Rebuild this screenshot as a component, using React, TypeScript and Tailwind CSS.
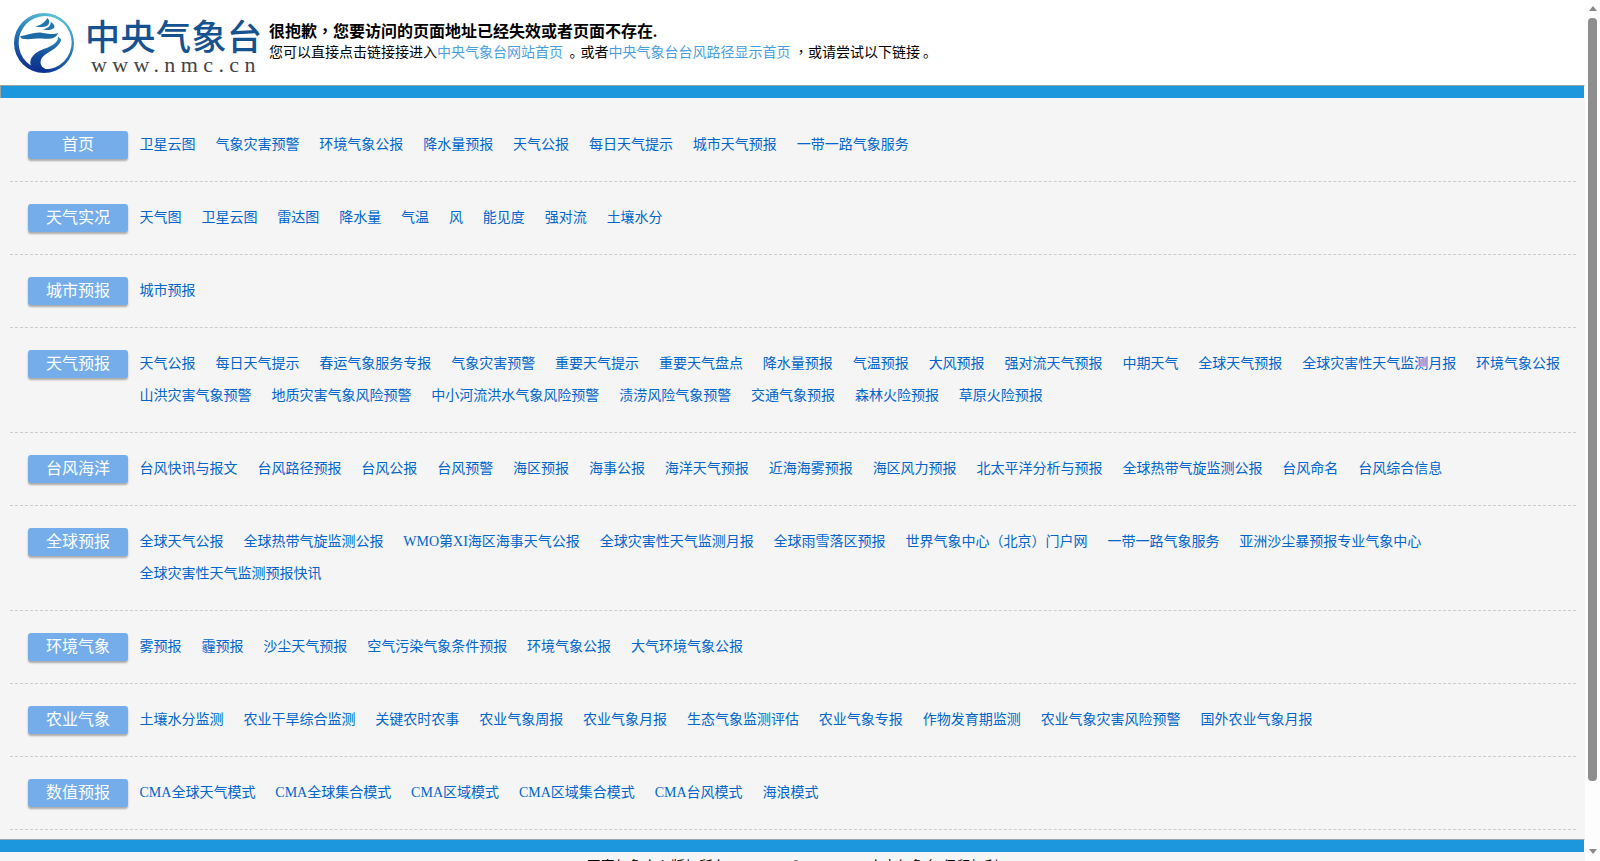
const sections: { title: string; links: string[] }[] = [
  { title: "首页", links: ["卫星云图", "气象灾害预警", "环境气象公报", "降水量预报", "天气公报", "每日天气提示", "城市天气预报", "一带一路气象服务"] },
  { title: "天气实况", links: ["天气图", "卫星云图", "雷达图", "降水量", "气温", "风", "能见度", "强对流", "土壤水分"] },
  { title: "城市预报", links: ["城市预报"] },
  {
    title: "天气预报",
    links: ["天气公报", "每日天气提示", "春运气象服务专报", "气象灾害预警", "重要天气提示", "重要天气盘点", "降水量预报", "气温预报", "大风预报", "强对流天气预报", "中期天气", "全球天气预报", "全球灾害性天气监测月报", "环境气象公报", "山洪灾害气象预警", "地质灾害气象风险预警", "中小河流洪水气象风险预警", "渍涝风险气象预警", "交通气象预报", "森林火险预报", "草原火险预报"],
  },
  { title: "台风海洋", links: ["台风快讯与报文", "台风路径预报", "台风公报", "台风预警", "海区预报", "海事公报", "海洋天气预报", "近海海雾预报", "海区风力预报", "北太平洋分析与预报", "全球热带气旋监测公报", "台风命名", "台风综合信息"] },
  { title: "全球预报", links: ["全球天气公报", "全球热带气旋监测公报", "WMO第XI海区海事天气公报", "全球灾害性天气监测月报", "全球雨雪落区预报", "世界气象中心（北京）门户网", "一带一路气象服务", "亚洲沙尘暴预报专业气象中心", "全球灾害性天气监测预报快讯"] },
  { title: "环境气象", links: ["雾预报", "霾预报", "沙尘天气预报", "空气污染气象条件预报", "环境气象公报", "大气环境气象公报"] },
  { title: "农业气象", links: ["土壤水分监测", "农业干旱综合监测", "关键农时农事", "农业气象周报", "农业气象月报", "生态气象监测评估", "农业气象专报", "作物发育期监测", "农业气象灾害风险预警", "国外农业气象月报"] },
  { title: "数值预报", links: ["CMA全球天气模式", "CMA全球集合模式", "CMA区域模式", "CMA区域集合模式", "CMA台风模式", "海浪模式"] },
];

function Logo() {
  return (
    <svg width="62" height="62" viewBox="12 12 186 186" className="shrink-0">
      <defs>
        <linearGradient id="ring" x1="0.75" y1="0" x2="0.35" y2="1">
          <stop offset="0" stopColor="#63c8dc" />
          <stop offset="0.45" stopColor="#2a7fb8" />
          <stop offset="1" stopColor="#0d2f8f" />
        </linearGradient>
        <linearGradient id="body" x1="0.5" y1="0" x2="0.5" y2="1">
          <stop offset="0" stopColor="#2f8cc4" />
          <stop offset="0.55" stopColor="#124a9a" />
          <stop offset="1" stopColor="#0b2c90" />
        </linearGradient>
      </defs>
      <path
        fillRule="evenodd"
        fill="url(#ring)"
        d="M108 15a90 90 0 1 0 0 180a90 90 0 1 0 0-180zM110 24a80 80 0 0 1 2 160a78 78 0 0 1-80-78a80 80 0 0 1 78-82z"
      />
      <path d="M118 30C112 42 98 52 82 56C96 58 108 58 116 54C126 48 126 38 118 30Z" fill="#1f75ad" />
      <path d="M128 42C130 52 120 62 104 64C116 68 132 66 138 60C142 54 136 46 128 42Z" fill="#1f75ad" />
      <path d="M36 85C58 82 78 72 100 74C118 76 136 82 150 74C146 90 128 94 108 92C86 90 62 96 42 92Z" fill="#1c6aa8" />
      <path d="M150 86C152 106 122 118 102 125C82 132 62 150 68 170C72 185 100 195 130 188C105 185 92 170 100 152C108 135 150 125 160 96C158 92 154 88 150 86Z" fill="url(#body)" />
    </svg>
  );
}

export default function App() {
  return (
    <div className="flex h-screen overflow-hidden bg-white font-['Liberation_Serif','Noto_Sans_CJK_SC',serif]">
      <main className="w-[1585px] shrink-0">
        <header className="flex h-[85px] items-start bg-white pl-3">
          <div className="flex w-[257px] shrink-0 items-start pt-[12px]">
            <Logo />
            <div className="ml-[11px] mt-[5px]">
              <div className="text-[35px] leading-[36px] font-medium tracking-[0.5px] whitespace-nowrap text-[#15528f] font-['Noto_Sans_CJK_SC',serif]">中央气象台</div>
              <div className="ml-[6px] mt-[2px] text-[22px] leading-[20px] tracking-[5.4px] whitespace-nowrap text-[#444]">www.nmc.cn</div>
            </div>
          </div>
          <div className="pt-[21px] text-black whitespace-nowrap">
            <p className="text-[16px] leading-[21px] font-bold">
              很抱歉<span className="leading-[0] font-['Noto_Sans_CJK_TC',serif]">，</span>您要访问的页面地址已经失效或者页面不存在.
            </p>
            <p className="text-[14px] leading-[21px]">
              您可以直接点击链接接进入<a className="text-[#4a9fdf]">中央气象台网站首页</a> <span className="ml-[3px] mr-[-3px]">。</span>或者<a className="text-[#4a9fdf]">中央气象台台风路径显示首页</a> <span className="leading-[0] font-['Noto_Sans_CJK_TC',serif]">，</span>或请尝试以下链接<span className="ml-[3px] mr-[-3px]">。</span>
            </p>
          </div>
        </header>
        <div className="h-[13px] w-[1585px] border-t border-l border-r border-t-[#9aa4ab] border-l-[#9aa4ab] border-r-white bg-[#1c96dd]" />
        <div className="bg-[#f5f5f5] pt-[11px] pb-[9px]">
          {sections.map((s) => (
            <section key={s.title} className="mx-[10px] flex w-[1566px] border-b border-dashed border-[#ccc] py-[20px]">
              <div className="mt-[2px] ml-[18px] flex h-[28px] w-[100px] shrink-0 items-center justify-center rounded-[3px] bg-[#74ade9] text-[16px] text-white shadow-[0_2px_2px_rgba(0,0,0,0.3)]">
                {s.title}
              </div>
              <div className="ml-[11.5px] flex flex-1 flex-wrap gap-x-[19.9px]">
                {s.links.map((l) => (
                  <a key={l} className="text-[14px] leading-[32px] whitespace-nowrap text-[#0066cc]">
                    {l}
                  </a>
                ))}
              </div>
            </section>
          ))}
        </div>
        <div className="h-[13px] w-[1585px] border-t border-r border-t-[#9aa4ab] border-r-white bg-[#1c96dd]" />
        <div className="bg-[#f5f5f5] pt-[4px] text-center text-[14px] leading-[21px] text-black">
          国家气象中心版权所有 Copyright © 2010-2025 中央气象台 保留权利
        </div>
      </main>
      <aside className="flex w-[15px] shrink-0 flex-col items-center bg-[#fdfdfd]">
        <div className="mt-[6px] h-0 w-0 border-x-[4.5px] border-b-[5px] border-x-transparent border-b-[#888]" />
        <div className="mt-[7px] h-[763px] w-[9px] rounded-[4px] bg-[#8e8e8e]" />
        <div className="mt-[68px] h-0 w-0 border-x-[4.5px] border-t-[5px] border-x-transparent border-t-[#888]" />
      </aside>
    </div>
  );
}
